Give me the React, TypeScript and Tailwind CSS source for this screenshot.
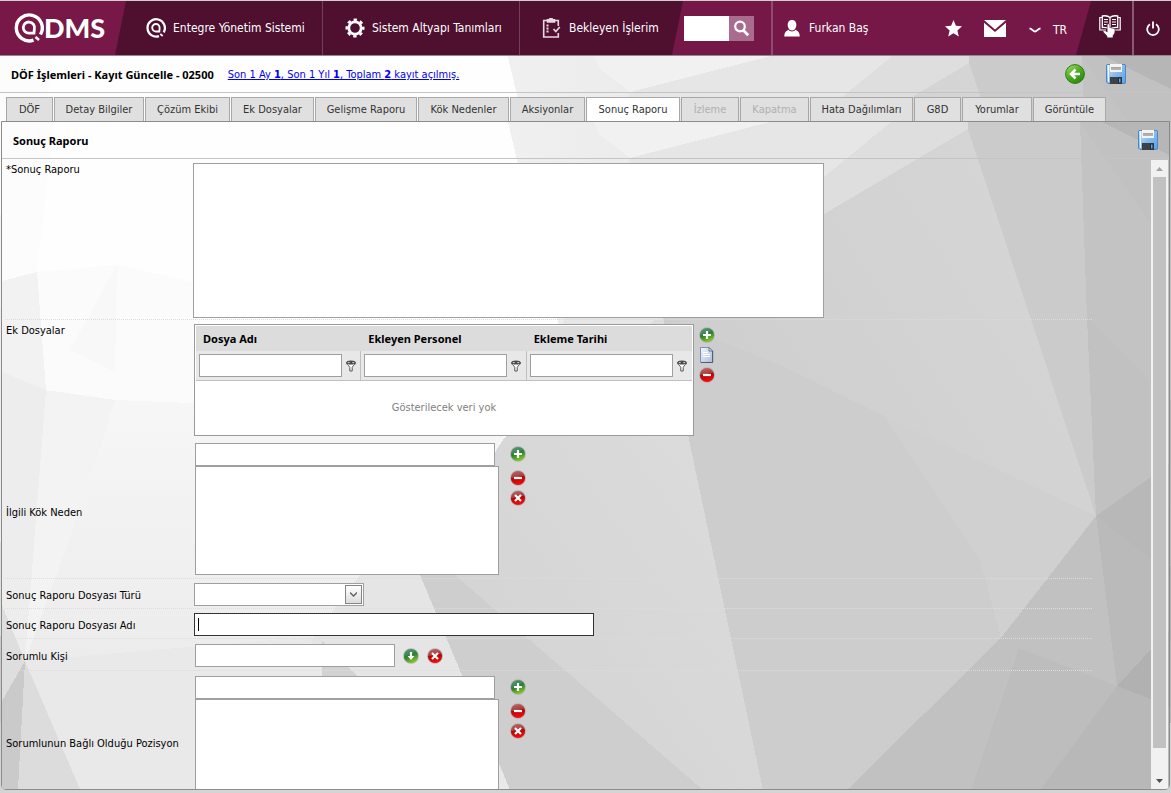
import type { ReactNode } from "react";

const tabs = [
  { name: "DÖF", width: "w-[47px]" },
  { name: "Detay Bilgiler", width: "w-[90px]" },
  { name: "Çözüm Ekibi", width: "w-[85px]" },
  { name: "Ek Dosyalar", width: "w-[83px]" },
  { name: "Gelişme Raporu", width: "w-[102px]" },
  { name: "Kök Nedenler", width: "w-[91px]" },
  { name: "Aksiyonlar", width: "w-[75px]" },
  { name: "Sonuç Raporu", width: "w-[94px]", active: true },
  { name: "İzleme", width: "w-[58px]", disabled: true },
  { name: "Kapatma", width: "w-[69px]", disabled: true },
  { name: "Hata Dağılımları", width: "w-[103px]" },
  { name: "G8D", width: "w-[47px]" },
  { name: "Yorumlar", width: "w-[70px]" },
  { name: "Görüntüle", width: "w-[73px]" },
];

const columns = ["Dosya Adı", "Ekleyen Personel", "Ekleme Tarihi"];

// gradients shared by the icons and the backdrop
function Gradients() {
  return (
    <svg className="absolute h-0 w-0" aria-hidden="true">
      <defs>
        <linearGradient id="green" x1="0" y1="0" x2="0.4" y2="1">
          <stop offset="0" stopColor="#5f9a78" />
          <stop offset="0.45" stopColor="#3c8655" />
          <stop offset="0.55" stopColor="#2a7d2c" />
          <stop offset="1" stopColor="#7cc22c" />
        </linearGradient>
        <linearGradient id="red" x1="0" y1="0" x2="0.2" y2="1">
          <stop offset="0" stopColor="#c06a6a" />
          <stop offset="0.48" stopColor="#a83c3c" />
          <stop offset="0.52" stopColor="#b00808" />
          <stop offset="1" stopColor="#f40a0a" />
        </linearGradient>
        <linearGradient id="lime" x1="0" y1="0" x2="0.7" y2="1">
          <stop offset="0" stopColor="#b4e070" />
          <stop offset="0.5" stopColor="#4fae22" />
          <stop offset="1" stopColor="#2f8a10" />
        </linearGradient>
        <linearGradient id="disk" x1="0" y1="0" x2="1" y2="1">
          <stop offset="0" stopColor="#d4e8fa" />
          <stop offset="0.5" stopColor="#86bbec" />
          <stop offset="1" stopColor="#5c9fe0" />
        </linearGradient>
        <linearGradient id="page" x1="0" y1="0" x2="1" y2="1">
          <stop offset="0" stopColor="#f4f7fc" />
          <stop offset="1" stopColor="#aabbdd" />
        </linearGradient>
        <linearGradient id="fade" x1="0" y1="0" x2="1" y2="0">
          <stop offset="0" stopColor="#f0f0f0" />
          <stop offset="1" stopColor="#e0e0e0" />
        </linearGradient>
        <linearGradient id="shade" x1="0" y1="0" x2="0" y2="1">
          <stop offset="0" stopColor="#f7f7f7" />
          <stop offset="1" stopColor="#ececec" />
        </linearGradient>
        <linearGradient id="mist" x1="1" y1="0" x2="0" y2="1">
          <stop offset="0" stopColor="#dedede" />
          <stop offset="1" stopColor="#d1d1d1" />
        </linearGradient>
        <linearGradient id="slate" x1="1" y1="0" x2="0" y2="1">
          <stop offset="0" stopColor="#d7d7d7" />
          <stop offset="1" stopColor="#cacaca" />
        </linearGradient>
      </defs>
    </svg>
  );
}

function Facets({ className }: { className: string }) {
  return (
    <svg
      className={className}
      viewBox="2 122 1167 667"
      preserveAspectRatio="xMinYMin slice"
      shapeRendering="crispEdges"
      aria-hidden="true"
    >
      <rect x="2" y="122" width="1167" height="667" fill="#fefefe" />
      <path d="M2 122H54L37 272L2 281Z" fill="#fcfcfc" />
      <path d="M508 122H968V330H560L517 160Z" fill="url(#fade)" />
      <path d="M594 122H770L630 158L600 135Z" fill="#f1f1f1" />
      <path d="M770 122H891L824 177V330H560L630 158Z" fill="#e6e6e6" />
      <path d="M891 122H968V129L824 214V177Z" fill="#dedede" />
      {/* left side */}
      <path d="M37 272L117 265L194 282V405L115 400L46 390Z" fill="#fbfbfb" />
      <path d="M2 281L37 272L46 390L2 372Z" fill="#f2f2f2" />
      <path d="M117 265L70 350L115 372Z" fill="#f8f8f8" />
      <path d="M46 390L115 400L420 412L505 437L430 575L450 625L25 661Z" fill="url(#shade)" />
      <path d="M46 390L115 400L80 510L25 661Z" fill="#f3f3f3" />
      <path d="M2 372L46 390L25 661L2 605Z" fill="#ededed" />
      <path d="M2 605L25 661L2 701Z" fill="#dedede" />
      <path d="M25 661L450 625L520 789H80Z" fill="#e9e9e9" />
      <path d="M25 661L80 789H18Z" fill="#dcdcdc" />
      <path d="M2 701L25 661L18 789H2Z" fill="#cacaca" />
      <path d="M360 575H430L470 675H331L311 640Z" fill="#e5e5e5" />
      <path d="M322 640L357 676H322Z" fill="#d2d2d2" />
      {/* centre */}
      <path d="M505 437L655 320H690V440L763 790H510L418 570Z" fill="url(#mist)" />
      <path d="M418 570L455 575L703 790H510Z" fill="#cecece" />
      {/* right side */}
      <path d="M968 129L1096 516L1001 638L847 790H763L688 435L663 318L824 214Z" fill="url(#slate)" />
      <path d="M663 318L780 365L884 416L980 560L1001 638L847 790H763L688 435Z" fill="#cdcdcd" />
      <path d="M884 416L1096 516L1001 638L980 560Z" fill="#d0d0d0" />
      <path d="M968 122H1080L1087 318L1096 516L968 129Z" fill="#cbcbcb" />
      <path d="M1080 122H1169V476L1096 516L1087 318Z" fill="#c1c1c1" />
      <path d="M1080 122L1169 250V260L1150 380L1087 318Z" fill="#c3c3c3" />
      <path d="M1102 122H1169V155Z" fill="#b6b6b6" />
      <path d="M1096 516L1169 464V573Z" fill="#b8b8b8" />
      <path d="M1096 516L1169 573V630L1117 686Z" fill="#bababa" />
      <path d="M1096 516L1117 686L1040 790H847L1001 638Z" fill="#c1c1c1" />
      <path d="M1019 648L1117 686L1040 790H971Z" fill="#bdbdbd" />
      <path d="M1117 686L1169 630V706Z" fill="#b1b1b1" />
      <path d="M1117 686L1169 706V790H1040Z" fill="#b8b8b8" />
    </svg>
  );
}

// ring with a smaller q-shaped ring inside
function Swirl({ className }: { className: string }) {
  return (
    <svg className={className} viewBox="0 0 30 30" fill="none" stroke="#fff" aria-hidden="true">
      <path d="M19.5 27.2A13 13 0 1 1 26.5 21.5" strokeWidth="3.4" />
      <path d="M20 20.2H15A5.6 5.6 0 1 1 20.4 15.5Z" strokeWidth="2.8" />
      <path d="M21.5 24L25 27" strokeWidth="2.6" />
    </svg>
  );
}

function Orb({ kind }: { kind: "plus" | "minus" | "cross" | "down" }) {
  const paths = {
    plus: "M8 4V12M4 8H12",
    minus: "M4 8H12",
    cross: "M5 5L11 11M11 5L5 11",
    down: "M8 4V9",
  };
  const green = kind === "plus" || kind === "down";
  return (
    <svg className="h-4 w-4" viewBox="0 0 16 16" aria-hidden="true">
      <circle cx="8" cy="8" r="7.8" fill="#b0b0b0" />
      <circle cx="8" cy="8" r="7.1" fill={green ? "url(#green)" : "url(#red)"} />
      <path d={paths[kind]} stroke="#fff" strokeWidth="2.2" />
      {kind === "down" && <path d="M4.6 8H11.4L8 12Z" fill="#fff" />}
    </svg>
  );
}

function IconButton({ label, children }: { label: string; children: ReactNode }) {
  return (
    <button type="button" aria-label={label} className="block shrink-0">
      {children}
    </button>
  );
}

function Disk() {
  return (
    <svg className="h-5 w-5" viewBox="0 0 20 20" aria-hidden="true">
      <path d="M1 .5H19L19.5 1V19L19 19.5H2L.5 18V1Z" fill="url(#disk)" stroke="#4f86c4" />
      <path d="M2.5 1V18" stroke="#f0f8ff" />
      <rect x="4" y="0" width="12" height="8" fill="#f4f4f4" />
      <path d="M5 3.5H15" stroke="#a4a4a4" />
      <path d="M5 5H15" stroke="#707070" />
      <rect x="4" y="13" width="12" height="7" fill="#3c4248" />
      <rect x="12.5" y="14" width="2.5" height="5" fill="#5aa8e8" stroke="#1c2a3a" />
    </svg>
  );
}

function FilterIcon() {
  return (
    <svg className="h-3 w-3" viewBox="0 0 12 12" aria-hidden="true">
      <path d="M1.5 2.6C1.5 5 4.6 5.6 4.8 7.5V11H7.2V7.5C7.4 5.6 10.5 5 10.5 2.6Z" fill="#fff" stroke="#555" />
      <ellipse cx="6" cy="2.6" rx="4.6" ry="2" fill="#4a4a4a" />
      <ellipse cx="3.8" cy="2.6" rx="1.1" ry="0.7" fill="#ddd" />
      <ellipse cx="8.2" cy="2.6" rx="1.1" ry="0.7" fill="#ddd" />
    </svg>
  );
}

function Header() {
  return (
    <header className="flex h-14 shrink-0 border-t border-b border-t-[#cfcfcf] border-b-[#8c8c8c] bg-[#4f1030] text-xs text-white">
      <div className="flex w-[126px] shrink-0 items-center bg-[#771849] pl-[14px] [clip-path:polygon(0_0,100%_0,calc(100%-11px)_100%,0_100%)]">
        <Swirl className="h-[30px] w-[30px] shrink-0" />
        <span className="font-[Lato] text-[27px] leading-8 font-black">DMS</span>
      </div>
      <nav className="flex">
        <a href="#" className="flex w-[197px] items-center border-r border-[#714159] pl-5">
          <Swirl className="h-5 w-5" />
          <span className="ml-[7px] whitespace-nowrap">Entegre Yönetim Sistemi</span>
        </a>
        <a href="#" className="flex w-[197px] items-center border-r border-[#714159] pl-[22px]">
          <svg className="h-5 w-5" viewBox="0 0 20 20" aria-hidden="true">
            <circle cx="10" cy="10" r="6.2" fill="none" stroke="#fff" strokeWidth="2.8" />
            <circle cx="10" cy="10" r="8.3" fill="none" stroke="#fff" strokeWidth="2.4" strokeDasharray="3.4 3.12" strokeDashoffset="1.7" />
          </svg>
          <span className="ml-[7px] whitespace-nowrap">Sistem Altyapı Tanımları</span>
        </a>
        <a href="#" className="flex w-[152px] items-center pl-[21px]">
          <svg className="h-5 w-5" viewBox="0 0 20 20" fill="none" stroke="#e8d9e1" strokeWidth="1.6" aria-hidden="true">
            <path d="M6 2.5H2.7V19H17.3V15M17.3 8V2.5H14" />
            <path d="M6.5 1.8H8.5C8.5 0 11.5 0 11.5 1.8H13.5V4H6.5Z" fill="#e8d9e1" />
            <path d="M5.5 7.5H7.5M5.5 10.5H7.5M5.5 13.5H7.5" strokeWidth="1.8" />
            <path d="M12.5 11L14.8 13.5L18.8 9" />
          </svg>
          <span className="ml-2 whitespace-nowrap">Bekleyen İşlerim</span>
        </a>
      </nav>
      <div className="flex flex-1 items-center bg-[#751848] pl-3 [clip-path:polygon(11px_0,100%_0,calc(100%-15px)_100%,0_100%)]">
        <form className="flex h-[25px] items-stretch">
          <input type="text" aria-label="Ara" className="w-[45px] bg-white px-1 text-black" />
          <button type="button" aria-label="Ara" className="flex w-[25px] items-center justify-center bg-[#a96c8e]">
            <svg className="h-[17px] w-[17px]" viewBox="0 0 17 17" fill="none" stroke="#fff" aria-hidden="true">
              <circle cx="7" cy="6.5" r="4.8" strokeWidth="2.2" />
              <path d="M10.5 10.5L15.2 15.2" strokeWidth="2.8" />
            </svg>
          </button>
        </form>
        <span className="ml-[17px] h-full w-0.5 bg-[#8f4a70]" />
        <svg className="ml-[11px] h-[17px] w-4" viewBox="0 0 16 17" fill="#fff" aria-hidden="true">
          <path d="M8 0C11 0 12.3 2.2 12.3 5C12.3 7.5 10.8 10.5 8 10.5S3.7 7.5 3.7 5C3.7 2.2 5 0 8 0Z" />
          <path d="M4.5 9.8C6 12 10 12 11.5 9.8C14 10.8 15.6 12.5 15.8 16.5H.2C.4 12.5 2 10.8 4.5 9.8Z" />
        </svg>
        <span className="ml-[9px] whitespace-nowrap">Furkan Baş</span>
        <div className="mr-6 ml-auto flex items-center">
          <IconButton label="Favoriler">
            <svg className="h-[17px] w-[17px]" viewBox="0 0 17 17" fill="#fff" aria-hidden="true">
              <path d="M8.5 0L10.9 5.7L17 6.3L12.4 10.4L13.8 16.5L8.5 13.3L3.2 16.5L4.6 10.4L0 6.3L6.1 5.7Z" />
            </svg>
          </IconButton>
          <span className="w-[22px]" />
          <IconButton label="Mesajlar">
            <svg className="h-[17px] w-[22px]" viewBox="0 0 22 17" fill="#fff" aria-hidden="true">
              <path d="M0 0H22L11 9.5Z" />
              <path d="M0 2.8L11 12L22 2.8V17H0Z" />
            </svg>
          </IconButton>
          <button type="button" className="mt-1 ml-[23px] flex items-center gap-3">
            <svg className="h-[6px] w-3" viewBox="0 0 12 6" fill="none" stroke="#fff" strokeWidth="2" aria-hidden="true">
              <path d="M.5 1.5C3 1.5 4 4.5 6 4.5S9 1.5 11.5 1.5" />
            </svg>
            TR
          </button>
        </div>
      </div>
      <button type="button" aria-label="Yardım" className="flex w-[41px] items-center pl-2">
        <svg className="mb-1 h-[23px] w-[22px]" viewBox="0 0 22 23" aria-hidden="true">
          <path d="M11 2.5C9 .6 5.5.6 3.3 1V12.5C6 12.3 9 12.5 11 14.2C13 12.5 16 12.3 18.7 12.5V1C16.5.6 13 .6 11 2.5ZM11 2.5V13" fill="none" stroke="#fff" strokeWidth="1.3" />
          <path d="M3 2.5H.8V15H7M19 2.5H21.2V15H15M5 4.5H9M5 7H9M5 9.5H7.5M13 4.5H17M13 7H17M13 9.5H17" fill="none" stroke="#fff" strokeWidth="1.2" />
          <path d="M8.2 10C8.2 8.4 10.8 8.4 10.8 10V12.6L15.8 13.8C16.4 17 15.6 19 14 20.5V22.8H8V21L4 16.8C4.4 15.2 6 15.2 8.2 17Z" fill="#fff" stroke="#4f1030" strokeWidth=".5" />
        </svg>
      </button>
      <span className="w-0.5 bg-[#8a5a72]" />
      <button type="button" aria-label="Çıkış" className="flex w-[37px] items-center justify-center">
        <svg className="h-[15px] w-[14px]" viewBox="0 0 14 15" fill="none" stroke="#fff" strokeWidth="1.8" aria-hidden="true">
          <path d="M4 3.3A5.8 5.8 0 1 0 10 3.3M7 .5V7.5" />
        </svg>
      </button>
    </header>
  );
}

function Row({ label, htmlFor, top, line, children }: {
  label: string;
  htmlFor: string;
  top?: boolean;
  line?: boolean;
  children: ReactNode;
}) {
  return (
    <div className={`flex ${top ? "items-start" : "items-center"} ${line ? "border-b border-dotted border-[#dcdcdc]" : ""}`}>
      <label htmlFor={htmlFor} className="w-[188px] shrink-0 pt-1 pl-px">
        {label}
      </label>
      {children}
    </div>
  );
}

function ListPicker({ id, label }: { id: string; label: string }) {
  return (
    <div className="ml-0.5 flex gap-[11px]">
      <div>
        <input id={id} type="text" className="block h-[23px] w-[300px] border border-[#9f9f9f] bg-white px-1" />
        <select multiple aria-label={label} className="block h-[109px] w-[304px] appearance-none border border-[#9f9f9f] bg-white" />
      </div>
      <div className="flex flex-col gap-1 pt-[3px]">
        <IconButton label="Ekle"><Orb kind="plus" /></IconButton>
        <div className="mt-1 flex flex-col gap-1">
          <IconButton label="Çıkar"><Orb kind="minus" /></IconButton>
          <IconButton label="Temizle"><Orb kind="cross" /></IconButton>
        </div>
      </div>
    </div>
  );
}

function FileTable() {
  return (
    <table id="ek-dosyalar" className="w-[500px] table-fixed border-separate border-spacing-0 border border-[#9b9b9b] bg-white p-px">
      <thead>
        <tr className="h-[25px] bg-[#dcdcdc]">
          {columns.map((column) => (
            <th key={column} className="pl-[7px] text-left font-['Noto_Sans'] font-bold">{column}</th>
          ))}
        </tr>
        <tr className="h-[30px] bg-[#e8e8e8]">
          {columns.map((column) => (
            <td key={column} className="border-r border-b border-[#c0c0c0] pl-[3px] last:border-r-0">
              <div className="flex items-center gap-[3px]">
                <input type="text" aria-label={column} className="h-[23px] w-[143px] min-w-0 border border-[#9f9f9f] bg-white px-1" />
                <IconButton label="Filtre"><FilterIcon /></IconButton>
              </div>
            </td>
          ))}
        </tr>
      </thead>
      <tbody>
        <tr className="h-[53px]">
          <td colSpan={3} className="text-center text-[#808080]">Gösterilecek veri yok</td>
        </tr>
      </tbody>
    </table>
  );
}

function Scrollbar() {
  return (
    <div className="mt-px mr-px flex w-[17px] shrink-0 flex-col bg-[#f1f1f1]">
      <button type="button" aria-label="Yukarı" className="flex h-[17px] shrink-0 items-center justify-center">
        <svg className="h-1 w-[7px]" viewBox="0 0 7 4" aria-hidden="true"><path d="M0 4L3.5 0L7 4Z" fill="#a3a3a3" /></svg>
      </button>
      <div className="mx-0.5 mb-6 flex-1 bg-[#c1c1c1]" />
      <button type="button" aria-label="Aşağı" className="flex h-[17px] shrink-0 items-center justify-center">
        <svg className="h-1 w-[7px]" viewBox="0 0 7 4" aria-hidden="true"><path d="M0 0L3.5 4L7 0Z" fill="#505050" /></svg>
      </button>
    </div>
  );
}

function ReportForm() {
  return (
    <form className="mr-[59px] ml-[3px] min-w-0 flex-1">
      <Row label="*Sonuç Raporu" htmlFor="sonuc" top line>
        <textarea id="sonuc" className="mt-1 mb-px h-[155px] w-[631px] resize-none border border-[#9f9f9f] bg-white p-1" />
      </Row>
      <Row label="Ek Dosyalar" htmlFor="ek-dosyalar" top>
        <div className="mt-1 mb-[7px] ml-px flex gap-[5px]">
          <FileTable />
          <div className="flex flex-col gap-1 pt-[3px]">
            <IconButton label="Dosya ekle"><Orb kind="plus" /></IconButton>
            <IconButton label="Dosyayı aç">
              <svg className="h-4 w-4" viewBox="0 0 16 16" aria-hidden="true">
                <path d="M1.5 .5H10L13.5 4V15.5H1.5Z" fill="url(#page)" stroke="#7f8faf" />
                <path d="M10 .5V4H13.5Z" fill="#fff" stroke="#60708f" />
                <path d="M4 5.5H9M4 7.5H11M4 9.5H11" stroke="#fff" />
                <path d="M13.7 4V15.6H2" fill="none" stroke="#4a5872" />
              </svg>
            </IconButton>
            <IconButton label="Dosyayı sil"><Orb kind="minus" /></IconButton>
          </div>
        </div>
      </Row>
      <Row label="İlgili Kök Neden" htmlFor="kok-neden" line>
        <div className="pb-[3px]">
          <ListPicker id="kok-neden" label="İlgili Kök Neden listesi" />
        </div>
      </Row>
      <Row label="Sonuç Raporu Dosyası Türü" htmlFor="dosya-turu" line>
        <div className="relative mt-1 mb-0.5 ml-px">
          <select id="dosya-turu" className="block h-[23px] w-[170px] appearance-none border border-[#9f9f9f] bg-white" />
          <span className="pointer-events-none absolute top-0.5 right-0.5 flex h-[19px] w-[17px] items-center justify-center border border-[#858585] bg-linear-to-b from-white to-[#dcdcdc]">
            <svg className="h-[5px] w-[7px]" viewBox="0 0 7 5" fill="none" stroke="#606060" strokeWidth="1.3" aria-hidden="true">
              <path d="M0 .5L3.5 4L7 .5" />
            </svg>
          </span>
        </div>
      </Row>
      <Row label="Sonuç Raporu Dosyası Adı" htmlFor="dosya-adi" line>
        <div className="relative mt-1 mb-0.5 ml-px">
          <input id="dosya-adi" type="text" className="block h-[23px] w-[400px] border border-[#333] bg-white px-1" />
          <span className="absolute top-[5px] left-1 h-[13px] w-px bg-black" />
        </div>
      </Row>
      <Row label="Sorumlu Kişi" htmlFor="sorumlu" line>
        <div className="mt-[5px] mb-[3px] ml-0.5 flex items-center gap-2">
          <input id="sorumlu" type="text" className="h-[23px] w-[200px] border border-[#9f9f9f] bg-white px-1" />
          <IconButton label="Seç"><Orb kind="down" /></IconButton>
          <IconButton label="Temizle"><Orb kind="cross" /></IconButton>
        </div>
      </Row>
      <Row label="Sorumlunun Bağlı Olduğu Pozisyon" htmlFor="pozisyon">
        <div className="py-[5px]">
          <ListPicker id="pozisyon" label="Sorumlunun Bağlı Olduğu Pozisyon listesi" />
        </div>
      </Row>
    </form>
  );
}

export default function App() {
  return (
    <div className="flex h-screen flex-col overflow-hidden bg-[#d4d4d4] font-['DejaVu_Sans_Condensed','Noto_Sans',sans-serif] text-[11px] leading-[14px] text-black">
      <Gradients />
      <Header />
      <main className="relative isolate flex min-h-0 flex-1 flex-col">
        <Facets className="absolute top-0 left-0 -z-10 h-[667px] w-full" />
        <div className="flex h-[37px] shrink-0 items-center border-b border-[#c4c4c4] pr-[45px] pl-[11px]">
          <h1 className="pt-0.5 font-['Noto_Sans'] font-bold whitespace-nowrap">DÖF İşlemleri - Kayıt Güncelle - 02500</h1>
          <a href="#" className="ml-[14px] pt-0.5 whitespace-nowrap text-[#0000ee] underline">
            Son 1 Ay <b>1</b>, Son 1 Yıl <b>1</b>, Toplam <b>2</b> kayıt açılmış.
          </a>
          <div className="ml-auto flex gap-[21px]">
            <IconButton label="Geri">
              <svg className="h-5 w-5" viewBox="0 0 20 20" aria-hidden="true">
                <circle cx="10" cy="10" r="9.4" fill="url(#lime)" stroke="#2c7a18" />
                <path d="M15 10H7M10.5 5.5L6 10L10.5 14.5" fill="none" stroke="#fff" strokeWidth="2.6" />
              </svg>
            </IconButton>
            <IconButton label="Kaydet"><Disk /></IconButton>
          </div>
        </div>
        <div role="tablist" className="mt-1 flex h-6 shrink-0 gap-px pl-[6px]">
          {tabs.map((tab) => (
            <button
              key={tab.name}
              type="button"
              role="tab"
              disabled={tab.disabled}
              aria-selected={!!tab.active}
              className={`${tab.width} shrink-0 border border-b-0 border-[#a8a8a8] whitespace-nowrap ${
                tab.active ? "bg-white text-[#333]" : tab.disabled ? "bg-[#e0e0e0] text-[#b0b0b0]" : "bg-[#e0e0e0] text-[#333]"
              }`}
            >
              {tab.name}
            </button>
          ))}
        </div>
        <section className="relative isolate mx-px mb-[3px] flex min-h-0 flex-1 flex-col overflow-hidden rounded-b-[5px] border border-[#8b8b8b]">
          <Facets className="absolute top-0 left-0 -z-10 h-full w-full" />
          <div className="flex h-[37px] shrink-0 items-center justify-between border-b border-[#c4c4c4] pr-[11px] pl-[11px]">
            <h2 className="pt-0.5 font-['Noto_Sans'] font-bold">Sonuç Raporu</h2>
            <IconButton label="Kaydet"><Disk /></IconButton>
          </div>
          <div className="flex min-h-0 flex-1 overflow-hidden">
            <ReportForm />
            <Scrollbar />
          </div>
        </section>
      </main>
    </div>
  );
}
